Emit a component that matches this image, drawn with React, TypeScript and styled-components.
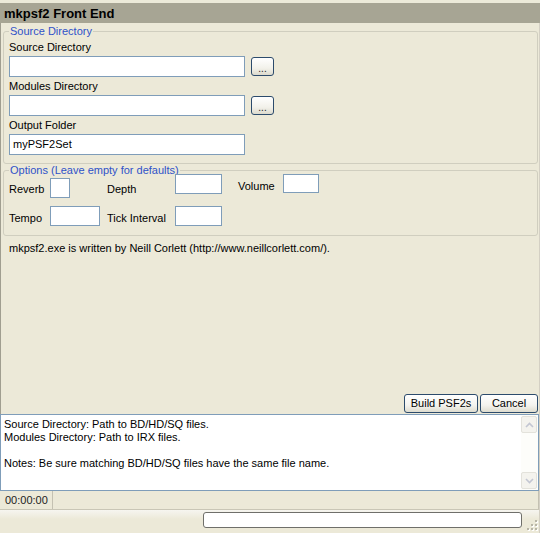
import React from "react";
import styled, { createGlobalStyle } from "styled-components";

const Global = createGlobalStyle`
  html, body { margin: 0; padding: 0; background: #ece9d8; }
  body { font-family: "Liberation Sans", Arial, sans-serif; font-size: 11px; color: #000; }
  * { box-sizing: border-box; }
`;

const Window = styled.div`
  width: 540px;
  height: 533px;
  background: #ece9d8;
  display: flex;
  flex-direction: column;
  overflow: hidden;
`;

const TopStrip = styled.div`
  height: 3px;
  background: #ecead9;
`;

const TitleBar = styled.div`
  height: 20px;
  background: #a7a594;
  display: flex;
  align-items: center;
  padding-left: 4px;
  font-weight: bold;
  font-size: 13px;
  color: #000;
`;

const Body = styled.div`
  flex: 1;
  display: flex;
  flex-direction: column;
  border-left: 1px solid #a09e90;
  border-right: 1px solid #d4d0c4;
  padding: 2px 1px 0 2px;
`;

const Group = styled.fieldset<{ $h: number; $pt: number }>`
  margin: 0;
  height: ${(p) => p.$h}px;
  border: 1px solid #d0cebf;
  border-radius: 3px;
  padding: ${(p) => p.$pt}px 0 0 5px;
  position: relative;
`;

const Legend = styled.legend`
  color: #2f52c8;
  padding: 0 1px 0 1px;
  margin-left: 0;
  line-height: 13px;
`;

const Label = styled.div`
  height: 15px;
  line-height: 13px;
`;

const FieldRow = styled.div`
  display: flex;
  align-items: center;
  gap: 6px;
  margin-bottom: 3px;
`;

const TextBox = styled.div<{ $w: number }>`
  width: ${(p) => p.$w}px;
  height: 21px;
  background: #fff;
  border: 1px solid #7f9db9;
  padding-left: 3px;
  line-height: 19px;
`;

const SmallButton = styled.div`
  width: 23px;
  height: 19px;
  border: 1px solid #2c4b6c;
  border-radius: 3px;
  background: linear-gradient(#ffffff, #f2f1ea 60%, #dcdacd);
  display: flex;
  align-items: flex-end;
  justify-content: center;
  font-size: 10px;
  line-height: 13px;
  color: #222;
`;

const OptionsGrid = styled.div`
  display: grid;
  grid-template-columns: 41px 57px 68px 63px 45px 40px;
  grid-template-rows: 29px 20px;
  row-gap: 2px;
  align-items: start;
`;

const OptLabel = styled.div<{ $dy: number }>`
  margin-top: ${(p) => p.$dy}px;
  line-height: 13px;
`;

const OptBox = styled.div<{ $w: number; $dy: number; $h?: number }>`
  margin-top: ${(p) => p.$dy}px;
  width: ${(p) => p.$w}px;
  height: ${(p) => p.$h ?? 20}px;
  background: #fff;
  border: 1px solid #7f9db9;
`;

const Credit = styled.div`
  padding: 6px 0 0 6px;
  line-height: 13px;
`;

const Spacer = styled.div`
  flex: 1;
`;

const ButtonRow = styled.div`
  display: flex;
  justify-content: flex-end;
  gap: 2px;
  margin-bottom: 1px;
`;

const Button = styled.div<{ $w: number }>`
  width: ${(p) => p.$w}px;
  height: 19px;
  border: 1px solid #2c4b6c;
  border-radius: 3px;
  background: linear-gradient(#ffffff, #f4f3ee 60%, #dedccf);
  display: flex;
  align-items: center;
  justify-content: center;
  line-height: 13px;
`;

const TextArea = styled.div`
  height: 77px;
  margin: 0 -1px 0 -3px;
  background: #fff;
  border: 1px solid #7f9db9;
  display: flex;
`;

const TextContent = styled.div`
  flex: 1;
  padding: 3px 0 0 3px;
  line-height: 13px;
  white-space: pre;
`;

const ScrollBar = styled.div`
  width: 17px;
  background: #fdfdfa;
  display: flex;
  flex-direction: column;
  justify-content: space-between;
  padding: 1px 0 1px 0;
`;

const ArrowBtn = styled.div`
  width: 16px;
  height: 17px;
  border: 1px solid #e3e2db;
  border-radius: 2px;
  background: #f4f3ee;
  display: flex;
  align-items: center;
  justify-content: center;
`;

const StatusBar = styled.div`
  height: 19px;
  margin: 0 -1px 0 -3px;
  display: flex;
  border-bottom: 1px solid #c9c6b6;
  background: #ece9d8;
`;

const StatusPanel = styled.div<{ $w?: number }>`
  ${(p) => (p.$w ? `width: ${p.$w}px;` : "flex: 1;")}
  border-right: 1px solid #c4c1b2;
  display: flex;
  align-items: center;
  padding-left: 5px;
  color: #222;
`;

const BottomStrip = styled.div`
  height: 23px;
  margin: 0 -1px 0 -3px;
  background: linear-gradient(#f6f5f0, #ece9d8 40%);
  display: flex;
  align-items: flex-start;
  justify-content: flex-end;
  padding-top: 2px;
  position: relative;
`;

const Progress = styled.div`
  width: 319px;
  height: 16px;
  border: 1px solid #6f6f6a;
  border-radius: 3px;
  background: #fff;
  margin-right: 17px;
`;

const Grip = styled.svg`
  position: absolute;
  right: 1px;
  bottom: 2px;
`;

const Chevron = ({ up }: { up: boolean }) => (
  <svg width="9" height="6" viewBox="0 0 9 6">
    <path
      d={up ? "M1 5 L4.5 1.5 L8 5" : "M1 1 L4.5 4.5 L8 1"}
      fill="none"
      stroke="#c3c6d2"
      strokeWidth="1.6"
    />
  </svg>
);

export default function App() {
  return (
    <Window>
      <Global />
      <TopStrip />
      <TitleBar>mkpsf2 Front End</TitleBar>
      <Body>
        <Group $h={139} $pt={3}>
          <Legend>Source Directory</Legend>
          <Label>Source Directory</Label>
          <FieldRow>
            <TextBox $w={236} />
            <SmallButton>...</SmallButton>
          </FieldRow>
          <Label>Modules Directory</Label>
          <FieldRow>
            <TextBox $w={236} />
            <SmallButton>...</SmallButton>
          </FieldRow>
          <Label>Output Folder</Label>
          <FieldRow>
            <TextBox $w={236}>myPSF2Set</TextBox>
          </FieldRow>
        </Group>
        <Group $h={72} $pt={0}>
          <Legend>Options (Leave empty for defaults)</Legend>
          <OptionsGrid>
            <OptLabel $dy={6}>Reverb</OptLabel>
            <OptBox $w={20} $dy={1} />
            <OptLabel $dy={6}>Depth</OptLabel>
            <OptBox $w={47} $dy={-3} />
            <OptLabel $dy={3}>Volume</OptLabel>
            <OptBox $w={36} $dy={-3} $h={19} />
            <OptLabel $dy={4}>Tempo</OptLabel>
            <OptBox $w={50} $dy={-2} />
            <OptLabel $dy={4}>Tick Interval</OptLabel>
            <OptBox $w={47} $dy={-2} />
          </OptionsGrid>
        </Group>
        <Credit>mkpsf2.exe is written by Neill Corlett (http://www.neillcorlett.com/).</Credit>
        <Spacer />
        <ButtonRow>
          <Button $w={74}>Build PSF2s</Button>
          <Button $w={58}>Cancel</Button>
        </ButtonRow>
        <TextArea>
          <TextContent>
            {"Source Directory: Path to BD/HD/SQ files.\nModules Directory: Path to IRX files.\n\nNotes: Be sure matching BD/HD/SQ files have the same file name."}
          </TextContent>
          <ScrollBar>
            <ArrowBtn>
              <Chevron up />
            </ArrowBtn>
            <ArrowBtn>
              <Chevron up={false} />
            </ArrowBtn>
          </ScrollBar>
        </TextArea>
        <StatusBar>
          <StatusPanel $w={53}>00:00:00</StatusPanel>
          <StatusPanel />
        </StatusBar>
        <BottomStrip>
          <Progress />
          <Grip width="12" height="12" viewBox="0 0 12 12">
            {[
              [9, 1],
              [9, 5],
              [5, 5],
              [9, 9],
              [5, 9],
              [1, 9],
            ].map(([x, y], i) => (
              <g key={i}>
                <rect x={x + 1} y={y + 1} width="2" height="2" fill="#fff" />
                <rect x={x} y={y} width="2" height="2" fill="#b8b5a6" />
              </g>
            ))}
          </Grip>
        </BottomStrip>
      </Body>
    </Window>
  );
}
